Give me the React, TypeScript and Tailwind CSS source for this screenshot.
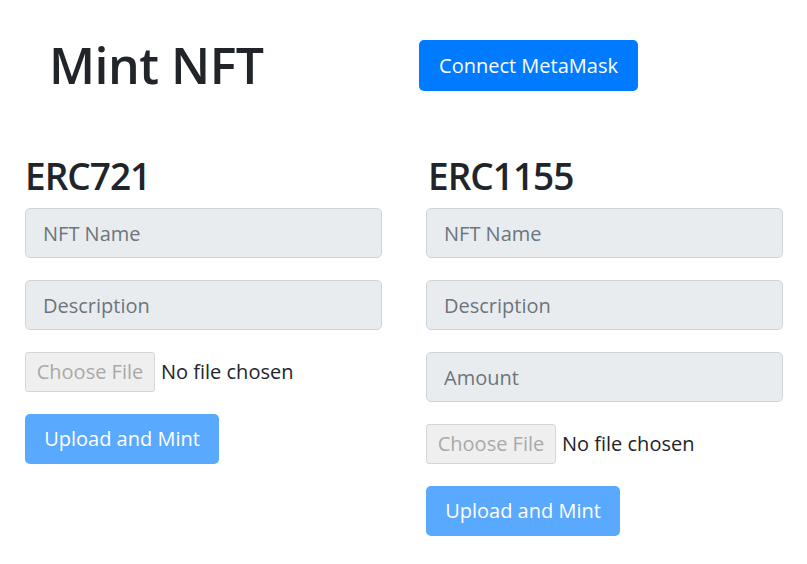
import React from "react";

function Field({ placeholder }: { placeholder: string }) {
  return (
    <input
      placeholder={placeholder}
      className="block w-full h-[50px] rounded-[5px] border border-[#ced4da] bg-[#e9ecef] px-[17px] text-[20px] text-[#495057] placeholder:text-[#6c757d] outline-none"
    />
  );
}

function FileRow() {
  return (
    <div className="flex items-center h-[40px]">
      <div className="h-[40px] w-[130px] flex items-center justify-center rounded-[3px] border border-[#d6d6d6] bg-[#efefef] text-[20px] text-[#a9a9a9]">
        Choose File
      </div>
      <span className="ml-[6px] text-[20px] text-[#212529]">No file chosen</span>
    </div>
  );
}

function MintButton() {
  return (
    <button className="h-[50px] w-[194px] rounded-[5px] bg-[#59a9ff] text-[20px] text-white">
      Upload and Mint
    </button>
  );
}

export default function App() {
  return (
    <div className="w-[807px] h-[564px] bg-white font-['Open_Sans',sans-serif] text-[#212529]">
      <div className="flex items-center pt-[40px] pl-[49px]">
        <h1 className="w-[370px] text-[50px] leading-[51px] font-semibold tracking-[-0.5px]">Mint NFT</h1>
        <button className="h-[51px] w-[219px] rounded-[5px] bg-[#007bff] text-[20px] text-white">
          Connect MetaMask
        </button>
      </div>
      <div className="flex gap-[44px] pl-[25px] pt-[62px]">
        <div className="w-[357px] flex flex-col gap-[22px]">
          <h2 className="text-[37px] leading-[46px] font-semibold tracking-[-1px] -mb-[13px]">ERC721</h2>
          <Field placeholder="NFT Name" />
          <Field placeholder="Description" />
          <FileRow />
          <div>
            <MintButton />
          </div>
        </div>
        <div className="w-[357px] flex flex-col gap-[22px]">
          <h2 className="text-[37px] leading-[46px] font-semibold tracking-[-1px] -mb-[13px] pl-[2px]">ERC1155</h2>
          <Field placeholder="NFT Name" />
          <Field placeholder="Description" />
          <Field placeholder="Amount" />
          <FileRow />
          <div>
            <MintButton />
          </div>
        </div>
      </div>
    </div>
  );
}
